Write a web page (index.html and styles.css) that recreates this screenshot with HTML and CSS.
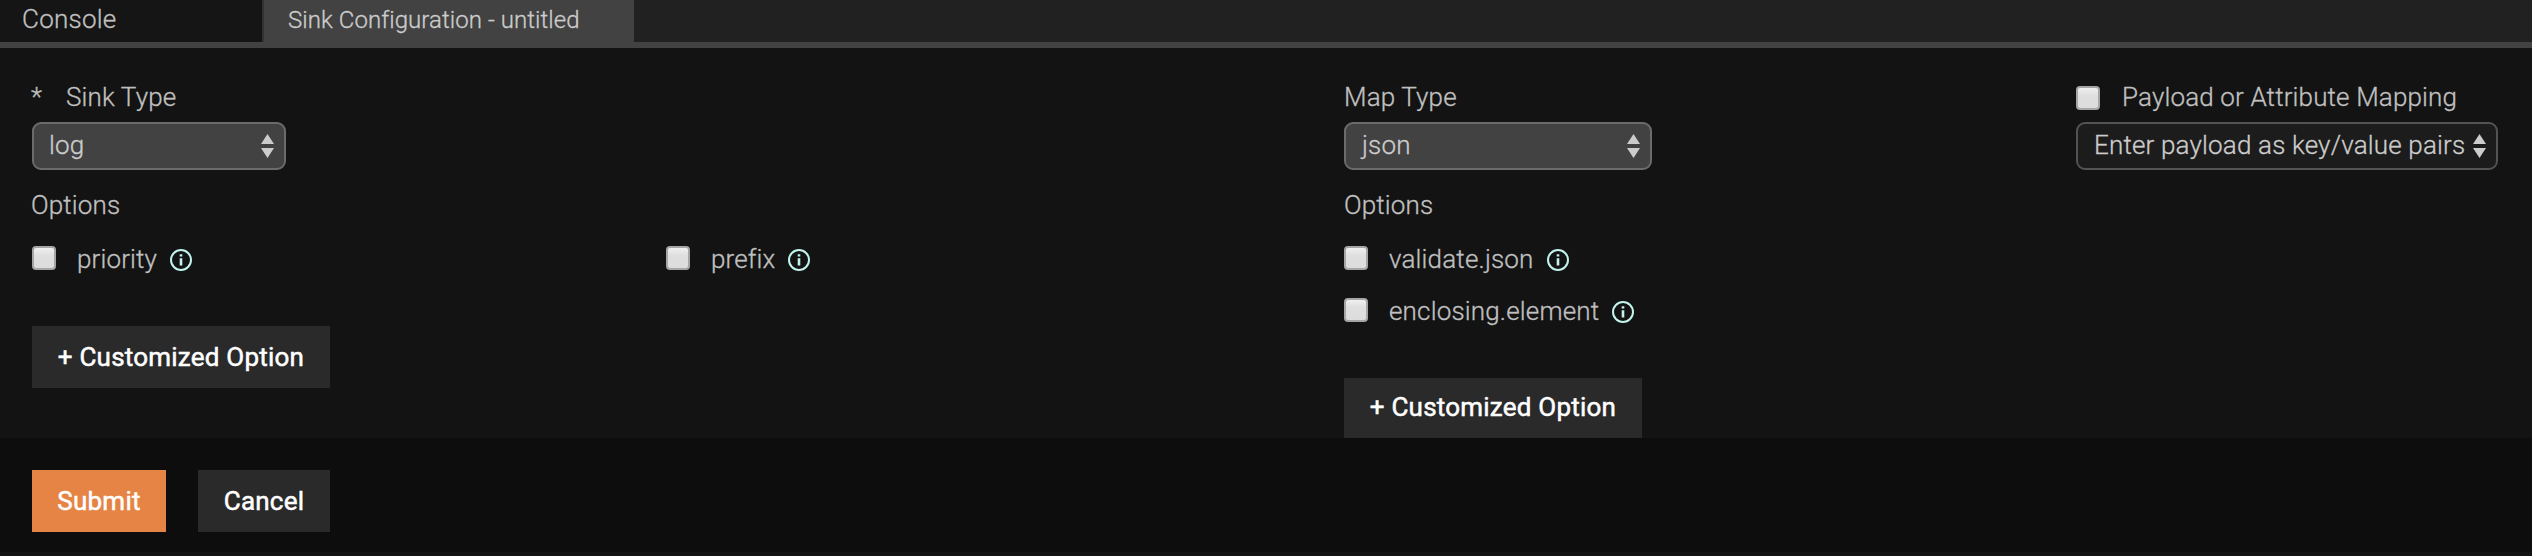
FILE: index.html
```
<!DOCTYPE html>
<html lang="en">
<head>
<meta charset="utf-8">
<title>Sink Configuration</title>
<link rel="stylesheet" href="styles.css">
</head>
<body>
<svg class="defs" aria-hidden="true">
  <symbol id="info" viewBox="0 0 22 22"><circle cx="11" cy="11" r="10" fill="none" stroke="currentColor" stroke-width="2"/><path d="M9.7 9.3h2.6v7.2H9.7zM9.7 5.2h2.6v2.3H9.7z" fill="currentColor"/></symbol>
  <symbol id="arrows" viewBox="0 0 13 24"><path d="M6.5 0L13 10H0zM0 14h13L6.5 24z" fill="currentColor"/></symbol>
</svg>
<nav class="tabs">
  <div class="tab"><span class="tab-text">Console</span></div>
  <div class="tab active"><span class="tab-text">Sink Configuration - untitled</span></div>
</nav>
<main class="form">
  <section class="sink">
    <div class="label"><span class="star">*</span><span>Sink Type</span></div>
    <div class="select"><span>log</span><svg class="arrows"><use href="#arrows"/></svg></div>
    <div class="heading">Options</div>
    <div class="options">
      <div class="option"><i class="check"></i><span class="name">priority</span><svg class="info"><use href="#info"/></svg></div>
      <div class="option"><i class="check"></i><span class="name">prefix</span><svg class="info"><use href="#info"/></svg></div>
    </div>
    <button class="btn custom"><span class="btn-text">+ Customized Option</span></button>
  </section>
  <section class="map">
    <div class="label">Map Type</div>
    <div class="select"><span>json</span><svg class="arrows"><use href="#arrows"/></svg></div>
    <div class="heading">Options</div>
    <div class="options">
      <div class="option"><i class="check"></i><span class="name">validate.json</span><svg class="info"><use href="#info"/></svg></div>
      <div class="option"><i class="check"></i><span class="name">enclosing.element</span><svg class="info"><use href="#info"/></svg></div>
    </div>
    <button class="btn custom"><span class="btn-text">+ Customized Option</span></button>
  </section>
  <section class="payload">
    <div class="label"><i class="check"></i><span>Payload or Attribute Mapping</span></div>
    <div class="select"><span>Enter payload as key/value pairs</span><svg class="arrows"><use href="#arrows"/></svg></div>
  </section>
</main>
<footer class="actions">
  <button class="btn submit"><span class="btn-text">Submit</span></button>
  <button class="btn cancel"><span class="btn-text">Cancel</span></button>
</footer>
</body>
</html>
```
FILE: styles.css
```
* { box-sizing: border-box; }
body {
  margin: 0;
  height: 556px;
  overflow: hidden;
  background: #131313;
  color: #c0c0c0;
  font: 300 26px/32px Roboto, sans-serif;
  letter-spacing: 0.15px;
  -webkit-text-stroke: 0.3px currentColor;
  white-space: nowrap;
}
.defs { display: none; }
.tabs {
  display: flex;
  height: 48px;
  background: #212121;
  border-bottom: 6px solid #424242;
}
.tab { width: 262px; padding: 3px 0 0 22px; background: #151515; letter-spacing: 0.25px; }
.tab.active {
  width: 372px;
  padding: 4px 0 0 24px;
  border-left: 2px solid #333;
  background: #424242;
  color: #ccc;
  font-size: 24px;
  letter-spacing: 0.07px;
}
.form {
  display: grid;
  grid-template-columns: 1312px 732px 1fr;
  height: 390px;
  padding: 33px 0 0 32px;
  overflow: hidden;
}
.label { display: flex; height: 41px; }
.star { width: 35px; }
.sink .label { margin-left: -1px; }
.select {
  display: flex;
  align-items: center;
  justify-content: space-between;
  height: 48px;
  padding: 0 10px 2px 16px;
  border: 2px solid #6b6b6b;
  border-radius: 9px;
  background: #424242;
  color: #ccc;
}
.select .arrows { width: 13px; height: 24px; margin-top: 1px; color: #ccc; }
.sink .select { width: 254px; padding-left: 15px; }
.map .select { width: 308px; }
.payload .select { width: 422px; padding-right: 10px; border-color: #535353; background: #1c1c1c; letter-spacing: 0.17px; }
.heading { margin-top: 19px; height: 54px; }
.sink .heading { margin-left: -1px; }
.options { display: grid; grid-template-columns: 634px 1fr; }
.map .options { grid-template-columns: 1fr; }
.option { display: flex; height: 52px; }
.map .option { letter-spacing: 0.17px; }
.check {
  width: 24px;
  height: 24px;
  margin: 3px 21px 0 0;
  border: 2px solid #a6a6a6;
  border-radius: 4px;
  background: linear-gradient(#f0f0f0, #dfdfdf 35%, #dcdcdc);
}
.payload .check { margin: 5px 22px 0 0; }
.info { width: 22px; height: 22px; margin: 6px 0 0 13px; color: #c2f3ec; }
.map .info { margin-left: 13px; }
.btn {
  display: block;
  height: 62px;
  padding: 0;
  border: 0;
  background: #2a2a2a;
  color: #fff;
  font: 400 26px/62px Roboto, sans-serif;
  letter-spacing: 0.22px;
  -webkit-text-stroke: 0.5px currentColor;
}
.custom { width: 298px; margin-top: 31px; }
.map .custom { line-height: 58px; height: 60px; padding-bottom: 2px; }
.actions {
  display: flex;
  gap: 32px;
  height: 116px;
  padding: 32px;
  background: #0d0d0d;
  border-bottom: 2px solid #131313;
}
.submit { width: 134px; background: #e68445; }
.cancel { width: 132px; }
```
